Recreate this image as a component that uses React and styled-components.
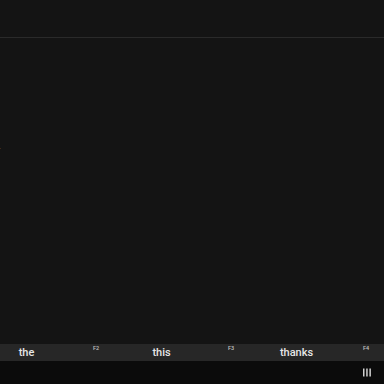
import React from 'react';
import styled, { createGlobalStyle } from 'styled-components';

const GlobalStyle = createGlobalStyle`
    html, body {
        margin: 0;
        padding: 0;
        background: #141414;
    }
    body {
        font-family: Roboto, "Liberation Sans", sans-serif;
    }
`;

const Screen = styled.div`
    width: 384px;
    height: 384px;
    display: flex;
    flex-direction: column;
    background: #141414;
    overflow: hidden;
`;

const TopBar = styled.div`
    height: 37px;
    flex-shrink: 0;
    border-bottom: 1px solid #2a2a2a;
`;

const Content = styled.div`
    flex: 1;
    padding-top: 108px;
`;

const CutLabel = styled.span`
    display: block;
    margin-left: -2px;
    font-size: 7px;
    line-height: 8px;
    color: #a0a0a0;
`;

const SuggestionStrip = styled.div`
    height: 17px;
    flex-shrink: 0;
    display: flex;
    background: #272727;
    overflow: hidden;
`;

const Cell = styled.div`
    flex: 0 0 135px;
    display: flex;
    align-items: flex-start;
`;

const Word = styled.span`
    width: 53px;
    text-align: center;
    font-size: 11px;
    font-weight: 500;
    line-height: 18px;
    color: #e6e6e6;
`;

const FKey = styled.span`
    margin-left: 40px;
    padding-top: 1px;
    font-size: 5.5px;
    font-weight: 500;
    line-height: 7px;
    color: #c0c0c0;
`;

const NavBar = styled.div`
    height: 23px;
    flex-shrink: 0;
    display: flex;
    align-items: center;
    justify-content: flex-end;
    padding-right: 13px;
    background: #0b0b0b;
`;

const suggestions = [
    { word: 'the', key: 'F2' },
    { word: 'this', key: 'F3' },
    { word: 'thanks', key: 'F4' },
];

function MenuIcon() {
    return (
        <svg width="8" height="9" viewBox="0 0 8 9">
            <g fill="#d0d0d0">
                <rect x="0" y="0.5" width="1.5" height="8" />
                <rect x="3.2" y="0.5" width="1.5" height="8" />
                <rect x="6.4" y="0.5" width="1.5" height="8" />
            </g>
        </svg>
    );
}

function App() {
    return (
        <>
            <GlobalStyle />
            <Screen>
                <TopBar />
                <Content>
                    <CutLabel>r</CutLabel>
                </Content>
                <SuggestionStrip>
                    {suggestions.map(s => (
                        <Cell key={s.word}>
                            <Word>{s.word}</Word>
                            <FKey>{s.key}</FKey>
                        </Cell>
                    ))}
                </SuggestionStrip>
                <NavBar>
                    <MenuIcon />
                </NavBar>
            </Screen>
        </>
    );
}

export default App;
